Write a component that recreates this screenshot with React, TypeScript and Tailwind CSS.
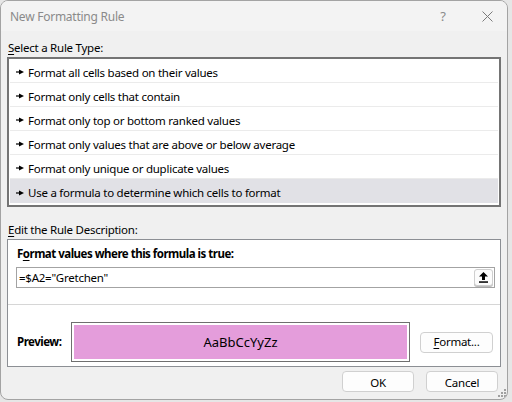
import React from "react";

const font = { fontFamily: '"Noto Sans", "Open Sans", sans-serif' };

function Bullet() {
  return (
    <svg width="8" height="6" viewBox="0 0 8 6" className="shrink-0">
      <rect x="0" y="2.4" width="4" height="1.2" fill="#000" />
      <polygon points="3,0.4 8,3 3,5.6" fill="#000" />
    </svg>
  );
}

const rules = [
  "Format all cells based on their values",
  "Format only cells that contain",
  "Format only top or bottom ranked values",
  "Format only values that are above or below average",
  "Format only unique or duplicate values",
  "Use a formula to determine which cells to format",
];

export default function App() {
  return (
    <div className="w-[512px] h-[402px] bg-[#e6e6e6] text-[11.5px] tracking-[-0.25px] text-black" style={font}>
      <div className="w-[508px] h-[400px] bg-[#f0f0f0] border border-[#a3a3a3] rounded-[8px] overflow-hidden flex flex-col relative">
        {/* title bar */}
        <div className="h-[30px] bg-[#f3f3f3] flex items-center shrink-0">
          <div className="pl-[9px] text-[#8a8a8a] text-[12px] leading-none pt-[1px]">New Formatting Rule</div>
          <div className="ml-auto flex items-center">
            <div className="w-[16px] text-center text-[#8a8a8a] text-[13px] leading-none mr-[31px]">?</div>
            <svg width="11" height="11" viewBox="0 0 11 11" className="mr-[14px]">
              <path d="M0.5 0.5 L10.5 10.5 M10.5 0.5 L0.5 10.5" stroke="#7a7a7a" strokeWidth="1" />
            </svg>
          </div>
        </div>

        {/* body */}
        <div className="flex flex-col px-[6px] pt-[9px]">
          <div className="h-[16px] leading-[16px] pl-[1px]">
            <span className="underline underline-offset-2">S</span>elect a Rule Type:
          </div>
          <div className="mt-[1px] h-[150px] border-2 border-[#747474] bg-white px-[1px] flex flex-col">
            {rules.map((r, i) => (
              <div
                key={i}
                className={
                  "h-[24px] shrink-0 flex items-center pl-[6px] gap-[4px] " +
                  (i === 5 ? "bg-[#e1e1e6]" : "border-b border-[#ebebeb]")
                }
              >
                <div className="pt-[3px]">
                  <Bullet />
                </div>
                <span className="leading-none pt-[4px]">{r}</span>
              </div>
            ))}
          </div>

          <div className="mt-[15px] h-[16px] leading-[16px] pl-[1px]">
            <span className="underline underline-offset-2">E</span>dit the Rule Description:
          </div>
          <div className="mt-[1px] h-[128px] border border-[#8c8f94] bg-white flex flex-col">
            <div className="pt-[6px] pl-[9px] h-[22px] leading-[16px] font-bold tracking-[-0.5px]">
              F<span className="underline underline-offset-2">o</span>rmat values where this formula is true:
            </div>
            <div className="mt-[5px] ml-[8px] w-[479px] h-[21px] border border-[#a3a3a3] flex items-center">
              <span className="pl-[2px] leading-none">=$A2="Gretchen"</span>
              <div className="ml-auto mr-[1px] w-[19px] h-[17px] rounded-[3px] border border-[#cfcfcf] bg-[#fcfcfc] shadow-[0_1px_0_#bdbdbd] flex items-center justify-center">
                <svg width="9" height="11" viewBox="0 0 9 11">
                  <polygon points="4.5,0 9,4.5 6,4.5 6,8 3,8 3,4.5 0,4.5" fill="#000" />
                  <rect x="0" y="9.3" width="9" height="1.5" fill="#000" />
                </svg>
              </div>
            </div>
            <div className="mt-[16px] h-px bg-[#d6d6d6]" />
            <div className="flex items-center pt-[17px]">
              <div className="pl-[9px] w-[63px] font-bold leading-none tracking-[-0.5px]">Preview:</div>
              <div className="w-[339px] h-[40px] border border-[#6f6f6f] p-[2px] bg-white">
                <div className="w-full h-full bg-[#e49ddb] flex items-center justify-center text-[13px] tracking-normal leading-none">
                  AaBbCcYyZz
                </div>
              </div>
              <div className="ml-[10px] w-[73px] h-[21px] rounded-[4px] border border-[#d0d0d0] bg-[#fdfdfd] flex items-center justify-center leading-none">
                <span><span className="underline underline-offset-2">F</span>ormat...</span>
              </div>
            </div>
          </div>

          <div className="flex justify-end gap-[12px] mt-[4px] pr-[3px]">
            <div className="w-[72px] h-[21px] rounded-[4px] border border-[#d0d0d0] bg-[#fdfdfd] flex items-center justify-center leading-none">
              <span className="pt-[3px]">OK</span>
            </div>
            <div className="w-[72px] h-[21px] rounded-[4px] border border-[#d0d0d0] bg-[#fdfdfd] flex items-center justify-center leading-none">
              <span className="pt-[3px]">Cancel</span>
            </div>
          </div>
        </div>

        <svg width="8" height="8" viewBox="0 0 8 8" className="absolute right-[1px] bottom-[2px]">
          <rect x="6" y="0" width="2" height="2" fill="#a0a0a0" />
          <rect x="3" y="3" width="2" height="2" fill="#a0a0a0" />
          <rect x="6" y="3" width="2" height="2" fill="#a0a0a0" />
          <rect x="0" y="6" width="2" height="2" fill="#a0a0a0" />
          <rect x="3" y="6" width="2" height="2" fill="#a0a0a0" />
          <rect x="6" y="6" width="2" height="2" fill="#a0a0a0" />
        </svg>
      </div>
    </div>
  );
}
